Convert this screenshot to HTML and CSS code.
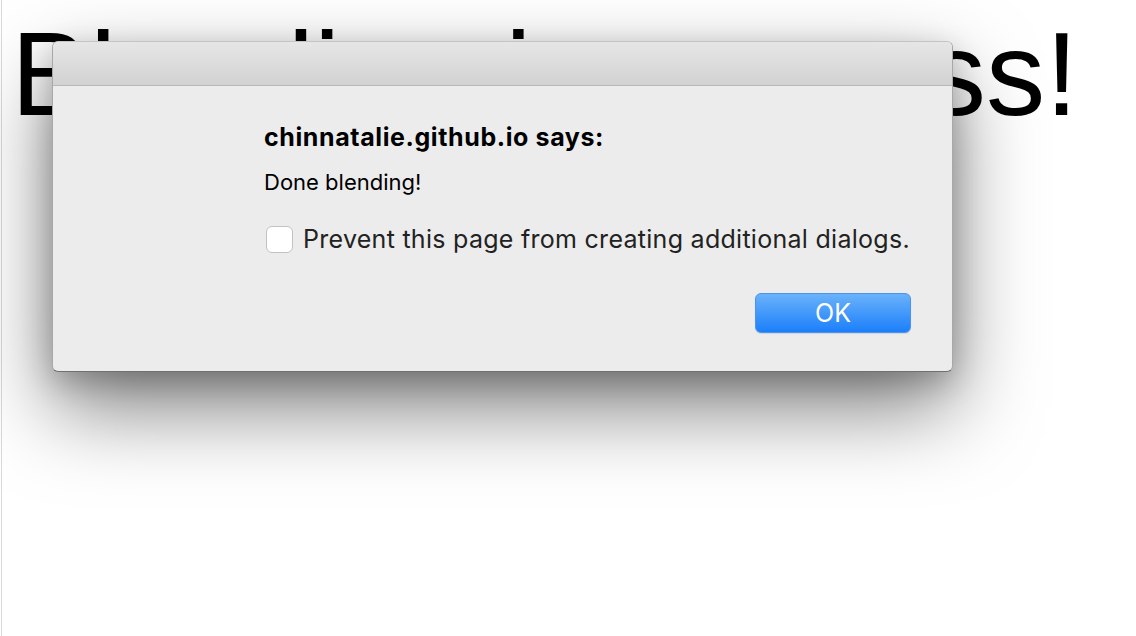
FILE: index.html
```html
<!DOCTYPE html>
<html lang="en">
<head>
<meta charset="utf-8">
<title>Blending</title>
<link rel="stylesheet" href="styles.css">
</head>
<body>
<div class="page">
  <h1 class="headline">Blending in process!</h1>
</div>
<div class="dialog" role="alertdialog">
  <div class="titlebar"></div>
  <div class="dialog-body">
    <div class="dialog-title">chinnatalie.github.io says:</div>
    <div class="dialog-message">Done blending!</div>
    <label class="dialog-check">
      <span class="checkbox"></span>
      <span class="check-label">Prevent this page from creating additional dialogs.</span>
    </label>
    <div class="dialog-actions">
      <button class="ok-button" type="button">OK</button>
    </div>
  </div>
</div>
</body>
</html>
```

FILE: styles.css
```css
html, body {
  margin: 0;
  padding: 0;
  background: #ffffff;
  height: 100%;
  overflow: hidden;
}

.page {
  margin-left: 1px;
  border-left: 1px solid #dadada;
  height: 100%;
  padding-left: 9px;
}

.headline {
  margin: 0;
  padding-top: 15px;
  font-family: "Liberation Sans", Arial, sans-serif;
  font-weight: normal;
  font-size: 118.5px;
  line-height: 1;
  color: #000;
  white-space: nowrap;
}

.dialog {
  position: absolute;
  left: 52px;
  top: 41px;
  width: 901px;
  height: 331px;
  box-sizing: border-box;
  background: #ececec;
  border-radius: 6px;
  border: 1px solid #a8a8a8;
  border-top-color: #c4c4c4;
  border-bottom-color: #707070;
  box-shadow: 0 36px 84px rgba(0, 0, 0, 0.5), 0 10px 30px rgba(0, 0, 0, 0.22);
  overflow: hidden;
  font-family: Inter, Roboto, sans-serif;
}

.titlebar {
  height: 43px;
  background: linear-gradient(#e7e6e7, #d3d2d3);
  border-bottom: 1px solid #b9b9b9;
}

.dialog-body {
  display: flex;
  flex-direction: column;
  padding: 0 41px 0 211px;
}

.dialog-title {
  margin-top: 37px;
  font-size: 25px;
  font-weight: 700;
  letter-spacing: 0.6px;
  line-height: 28px;
  color: #000;
  white-space: nowrap;
}

.dialog-message {
  margin-top: 18px;
  font-size: 22px;
  line-height: 26px;
  color: #000;
}

.dialog-check {
  margin-top: 29px;
  display: flex;
  align-items: center;
  gap: 10px;
}

.checkbox {
  width: 27px;
  height: 27px;
  margin-left: 2px;
  box-sizing: border-box;
  background: #ffffff;
  border: 1px solid #c2c2c2;
  border-radius: 6px;
}

.check-label {
  font-size: 25px;
  letter-spacing: 0.28px;
  line-height: 30px;
  color: #222;
  white-space: nowrap;
}

.dialog-actions {
  display: flex;
  justify-content: flex-end;
  margin-top: 39px;
}

.ok-button {
  width: 156px;
  height: 40px;
  border: 1px solid #4a93ee;
  border-radius: 6px;
  background: linear-gradient(#6ab2fb, #1c7ffa);
  color: #ffffff;
  font-family: Inter, Roboto, sans-serif;
  font-size: 25px;
  padding: 0;
  box-shadow: 0 1px 1px rgba(0, 0, 0, 0.1);
}
```
